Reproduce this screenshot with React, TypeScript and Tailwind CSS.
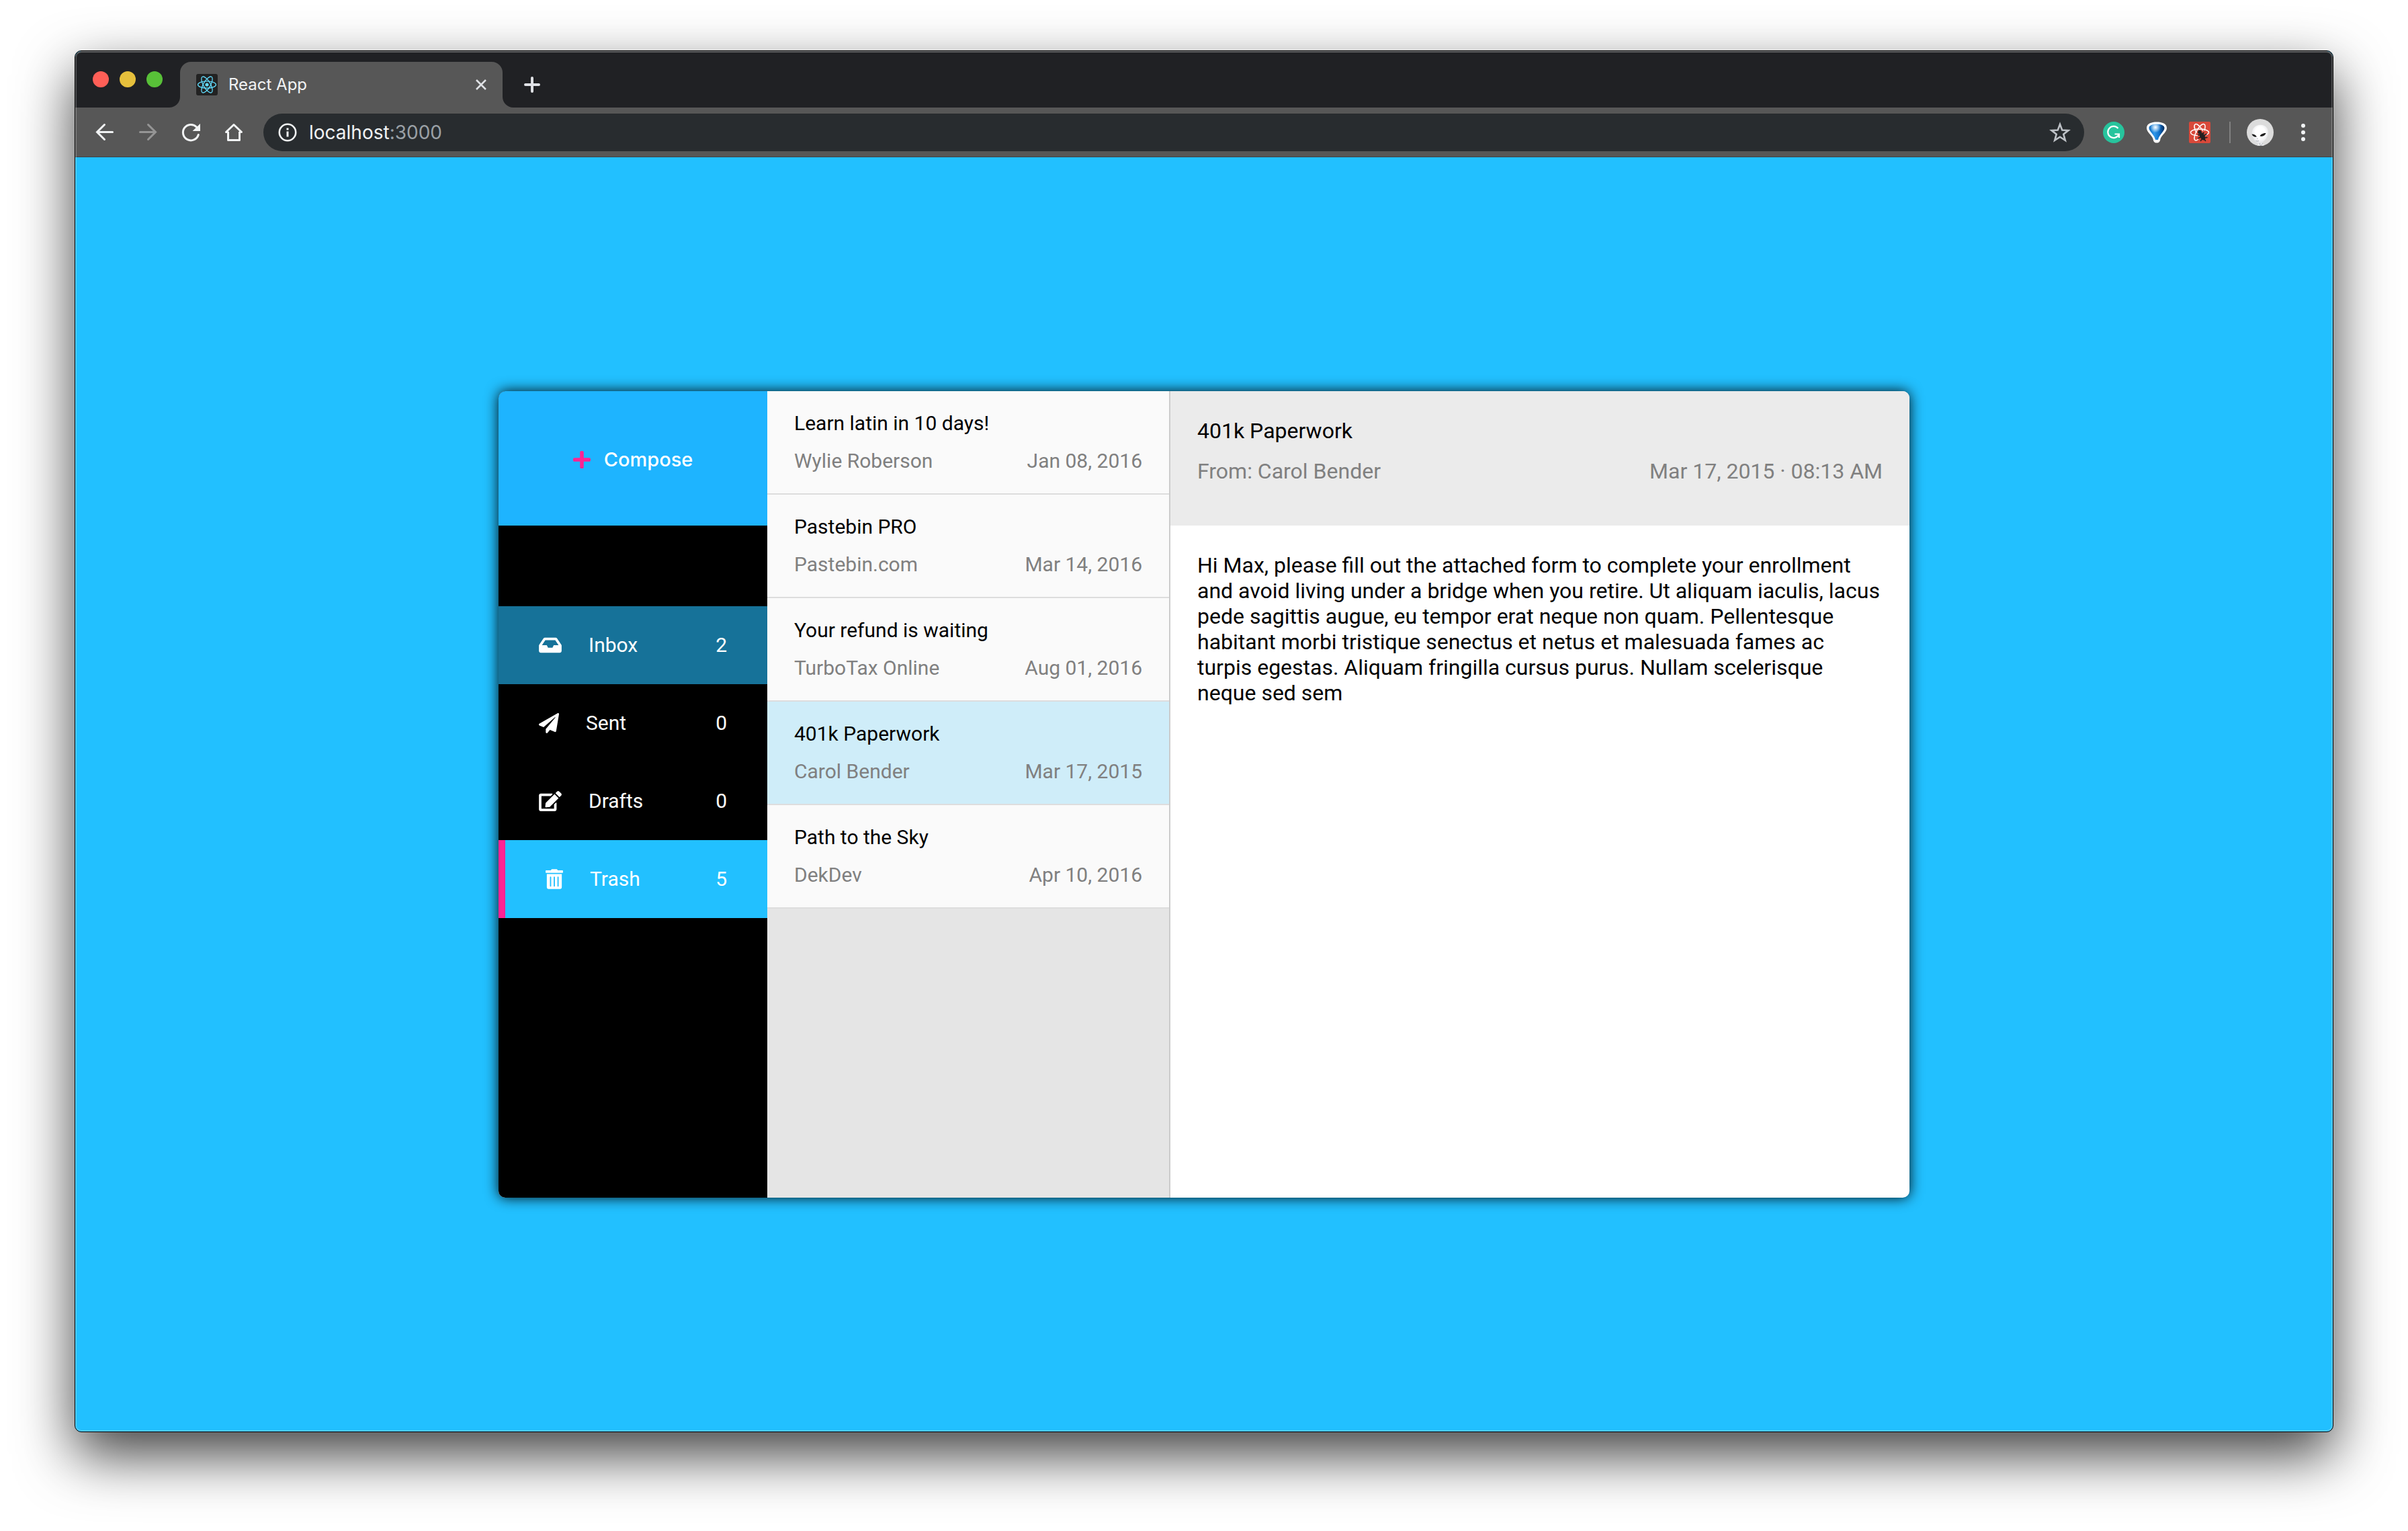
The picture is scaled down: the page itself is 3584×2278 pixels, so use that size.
import React from "react";
import { FaInbox, FaPaperPlane, FaEdit, FaPlus } from "react-icons/fa";

type Folder = { name: string; count: number; icon: React.ReactNode; state?: "hover" | "active" };
type Mail = { subject: string; from: string; date: string; selected?: boolean };

const TrashIcon = () => (
  <svg viewBox="0 0 448 512" className="h-[30px] w-[26px] shrink-0" fill="currentColor" aria-hidden="true">
    <path fillRule="evenodd" d="M32 464a48 48 0 0 0 48 48h288a48 48 0 0 0 48-48V128H32zm272-256a16 16 0 0 1 32 0v224a16 16 0 0 1-32 0zm-96 0a16 16 0 0 1 32 0v224a16 16 0 0 1-32 0zm-96 0a16 16 0 0 1 32 0v224a16 16 0 0 1-32 0zM432 32H312l-9.400-18.700A24 24 0 0 0 281.100 0H166.800a23.720 23.720 0 0 0-21.400 13.300L136 32H16A16 16 0 0 0 0 48v32a16 16 0 0 0 16 16h416a16 16 0 0 0 16-16V48a16 16 0 0 0-16-16z" />
  </svg>
);

const folders: Folder[] = [
  { name: "Inbox", count: 2, icon: <FaInbox className="h-[30px] w-[34px] shrink-0" />, state: "hover" },
  { name: "Sent", count: 0, icon: <FaPaperPlane className="size-[30px] shrink-0" /> },
  { name: "Drafts", count: 0, icon: <FaEdit className="h-[30px] w-[34px] shrink-0" /> },
  { name: "Trash", count: 5, icon: <TrashIcon />, state: "active" },
];

const mails: Mail[] = [
  { subject: "Learn latin in 10 days!", from: "Wylie Roberson", date: "Jan 08, 2016" },
  { subject: "Pastebin PRO", from: "Pastebin.com", date: "Mar 14, 2016" },
  { subject: "Your refund is waiting", from: "TurboTax Online", date: "Aug 01, 2016" },
  { subject: "401k Paperwork", from: "Carol Bender", date: "Mar 17, 2015", selected: true },
  { subject: "Path to the Sky", from: "DekDev", date: "Apr 10, 2016" },
];

function ReactFavicon() {
  return (
    <svg viewBox="0 0 32 32" className="size-8 shrink-0" aria-hidden="true">
      <rect width="32" height="32" rx="3" fill="#222" />
      <g fill="none" stroke="#61dafb" strokeWidth="1.3">
        <ellipse cx="16" cy="16" rx="13.500" ry="5.200" />
        <ellipse cx="16" cy="16" rx="13.500" ry="5.200" transform="rotate(60 16 16)" />
        <ellipse cx="16" cy="16" rx="13.500" ry="5.200" transform="rotate(120 16 16)" />
      </g>
      <circle cx="16" cy="16" r="2.600" fill="#61dafb" />
    </svg>
  );
}

function TabStrip() {
  return (
    <div className="flex h-[84px] items-end bg-[#202124]">
      <div className="flex h-[84px] items-center gap-4 pl-[26px] pr-[10px]">
        <button aria-label="Close window" className="size-6 rounded-full bg-[#ff5f57]" />
        <button aria-label="Minimize window" className="size-6 rounded-full bg-[#e6c03c]" />
        <button aria-label="Zoom window" className="size-6 rounded-full bg-[#58c038]" />
      </div>
      <svg viewBox="0 0 16 16" className="size-4 shrink-0" aria-hidden="true">
        <path d="M16 0v16H0A16 16 0 0 0 16 0z" fill="#575757" />
      </svg>
      <div className="flex h-[68px] w-[480px] items-center rounded-t-2xl bg-[#575757] px-6">
        <ReactFavicon />
        <span className="ml-4 grow text-2xl text-[#f1f3f4]">React App</span>
        <button aria-label="Close tab" className="flex size-4 items-center justify-center">
          <svg viewBox="0 0 16 16" className="size-4" stroke="#dfe1e5" strokeWidth="2.600" aria-hidden="true">
            <path d="M1 1l14 14M15 1L1 15" />
          </svg>
        </button>
      </div>
      <svg viewBox="0 0 16 16" className="size-4 shrink-0" aria-hidden="true">
        <path d="M0 0v16h16A16 16 0 0 1 0 0z" fill="#575757" />
      </svg>
      <button aria-label="New tab" className="ml-4 flex h-[68px] w-6 items-center">
        <svg viewBox="0 0 24 24" className="size-6" stroke="#dfe1e5" strokeWidth="4" strokeLinecap="round" aria-hidden="true">
          <path d="M12 2v20M2 12h20" />
        </svg>
      </button>
    </div>
  );
}

function Toolbar() {
  return (
    <div className="flex h-[74px] items-center border-b border-[#3f4346] bg-[#575757] px-7">
      <div className="flex gap-8">
        <button aria-label="Back" className="size-8">
          <svg viewBox="0 0 32 32" className="size-8" fill="none" stroke="#f1f3f4" strokeWidth="3" strokeLinecap="round" aria-hidden="true">
            <path d="M27.500 15.500H5M15.500 4.500L4.500 15.500l11 11" />
          </svg>
        </button>
        <button aria-label="Forward" className="size-8">
          <svg viewBox="0 0 32 32" className="size-8" fill="none" stroke="#959595" strokeWidth="3" strokeLinecap="round" aria-hidden="true">
            <path d="M4.500 15.500H27M16.500 4.500l11 11-11 11" />
          </svg>
        </button>
        <button aria-label="Reload" className="size-8">
          <svg viewBox="0 0 32 32" className="size-8" fill="none" stroke="#f1f3f4" strokeWidth="3" strokeLinecap="round" aria-hidden="true">
            <path d="M27.300 19.500A11.700 11.700 0 1 1 24.500 8" />
            <path d="M30 3v11H18.500z" fill="#f1f3f4" stroke="none" />
          </svg>
        </button>
        <button aria-label="Home" className="size-8">
          <svg viewBox="0 0 32 32" className="size-8" fill="none" stroke="#f1f3f4" strokeWidth="3" strokeLinejoin="round" aria-hidden="true">
            <path d="M8 15.500H4.500L16 4.500l11.500 11H24M7.500 15v12.500h17V15" />
          </svg>
        </button>
      </div>
      <div className="ml-7 flex h-14 grow items-center rounded-full bg-[#282c2f] pl-[22px] pr-5">
        <svg viewBox="0 0 28 28" className="size-7 shrink-0" fill="none" stroke="#f1f3f4" strokeWidth="2.600" aria-hidden="true">
          <circle cx="14" cy="14" r="12.200" />
          <path d="M14 12.500v8M14 7.500v3" strokeWidth="3" />
        </svg>
        <a href="http://localhost:3000" className="ml-[18px] grow text-[28px] text-[#f1f3f4]">
          localhost<span className="text-[#9aa0a6]">:3000</span>
        </a>
        <button aria-label="Bookmark this page" className="size-8">
          <svg viewBox="0 0 32 32" className="size-8" fill="none" stroke="#bdc1c6" strokeWidth="2.600" aria-hidden="true">
            <path d="M16 4l3.300 8.600 9.200.5-7.200 5.700 2.500 9-7.800-5.100-7.800 5.100 2.500-9-7.200-5.700 9.200-.5z" />
          </svg>
        </button>
      </div>
      <div className="ml-7 flex items-center gap-8">
        <button aria-label="Grammarly" className="size-8">
          <svg viewBox="0 0 32 32" className="size-8" aria-hidden="true">
            <circle cx="16" cy="16" r="16" fill="#27c49d" />
            <path d="M22.500 10A8.600 8.600 0 1 0 23.500 19.500M17.500 18.500H24V24" fill="none" stroke="#fff" strokeWidth="2.200" />
          </svg>
        </button>
        <button aria-label="Balloon" className="size-8">
          <svg viewBox="0 0 32 32" className="size-8" aria-hidden="true">
            <defs>
              <linearGradient id="balloon" x1="0" x2="1" y1="0" y2="0">
                <stop offset="0" stopColor="#0f6cc0" />
                <stop offset=".35" stopColor="#2f96e8" />
                <stop offset=".65" stopColor="#1273cc" />
                <stop offset="1" stopColor="#032a5c" />
              </linearGradient>
              <radialGradient id="shine" cx=".42" cy=".2" r=".35">
                <stop offset="0" stopColor="#fff" />
                <stop offset="1" stopColor="#fff" stopOpacity="0" />
              </radialGradient>
            </defs>
            <path d="M16 0.500C8 0.500 1 3 1 9.500c0 6 7.500 10.500 9.500 16C11 29.500 12.500 31.500 16 31.500s5-2 5.500-6C23.500 20 31 15.500 31 9.500 31 3 24 .5 16 .5z" fill="#fff" />
            <path d="M16 3.800c-6 0-11.500 1.700-11.500 5.700 0 5 8 10 9.500 17.500h4C19.500 19.500 27.500 14.500 27.500 9.500c0-4-5.500-5.700-11.500-5.700z" fill="url(#balloon)" />
            <path d="M16 3.800c-6 0-11.500 1.700-11.500 5.700 0 5 8 10 9.500 17.500h4C19.500 19.500 27.500 14.500 27.500 9.500c0-4-5.500-5.700-11.500-5.700z" fill="url(#shine)" />
          </svg>
        </button>
        <button aria-label="React developer tools" className="size-8">
          <svg viewBox="0 0 32 32" className="size-8" aria-hidden="true">
            <rect width="32" height="32" rx="2" fill="#d9493a" />
            <g fill="none" stroke="#fff" strokeWidth="1.500" strokeLinecap="round">
              <path d="M12.500 20.800C6.500 20.300 2.500 18.300 2.500 16c0-2.800 6-5 13.500-5s13.500 2.200 13.500 5c0 1.600-2 3-5 4" />
              <path d="M13.500 26.500c-1.700 1.400-3.300 1.900-4.300 1.200-2.300-1.400-1.300-7.500 2.400-14.200S20.300 2.500 22.700 3.800c1.700 1 1.700 4.600.3 9" />
              <path d="M20.500 13.500C16.700 6.800 11.700 2.500 9.300 3.800 7.100 5.100 8 10.500 11 16.500" />
            </g>
            <g fill="#231f20" stroke="#231f20" strokeLinecap="round">
              <circle cx="16" cy="15.700" r="2.400" />
              <ellipse cx="20" cy="22" rx="3.600" ry="6" transform="rotate(-30 20 22)" stroke="none" />
              <path d="M20 18l2-1.500M23 20.500l3-2M24 24l3-.5M23 26l1.500 2.500M18 20l-4.500-.5M18 23l-4 1.500M19.500 25.500l-2 3" strokeWidth="1.600" />
            </g>
          </svg>
        </button>
      </div>
      <div className="ml-7 h-8 w-[2px] bg-[#808080]" />
      <button aria-label="Profile" className="ml-6 size-10">
        <svg viewBox="0 0 40 40" className="size-10" aria-hidden="true">
          <defs>
            <radialGradient id="face" cx=".5" cy=".4" r=".6">
              <stop offset=".5" stopColor="#fff" />
              <stop offset="1" stopColor="#dfe0e4" />
            </radialGradient>
          </defs>
          <circle cx="20" cy="20" r="20" fill="#dcdcdc" />
          <path d="M19 35l-3 4.500h10L23 36z" fill="#eef0f2" />
          <path d="M20.500 8.800C28 8.800 32.500 14 32 21c-.4 6.500-6.500 12-10 15.500-1.500 1-4 1-5.500 0C12 34 8 27 7.800 21 7.800 14 13 8.800 20.500 8.800z" fill="url(#face)" />
          <path d="M7.500 22.500c3 0 6.200 1.300 7.300 4-3.300.8-6.300-.7-7.300-4z" fill="#1c1c1c" />
          <path d="M28.500 21c-4 0-7.800 1.600-9 4.500 4 1.200 8-.5 9-4.500z" fill="#1c1c1c" />
          <path d="M13.500 32.500c1.500.7 3 .7 4.500 0M15 29l1.500.3M19 36l1.500 4M24 36l-3 4" stroke="#9a9ea6" strokeWidth=".8" fill="none" />
        </svg>
      </button>
      <button aria-label="Menu" className="ml-7 size-8">
        <svg viewBox="0 0 32 32" className="size-8" fill="#f1f3f4" aria-hidden="true">
          <circle cx="16" cy="6" r="3" />
          <circle cx="16" cy="16" r="3" />
          <circle cx="16" cy="26" r="3" />
        </svg>
      </button>
    </div>
  );
}

function FolderRow({ folder }: { folder: Folder }) {
  const tone =
    folder.state === "active"
      ? "bg-[#22c0ff] border-l-[10px] border-[#ff2393]"
      : folder.state === "hover"
        ? "bg-[#167299]"
        : "bg-black";
  return (
    <button className={`flex w-full items-center px-[60px] py-10 text-left text-[30px] leading-9 text-white ${tone}`}>
      {folder.icon}
      <span className="ml-10 grow">{folder.name}</span>
      <span>{folder.count}</span>
    </button>
  );
}

function MailRow({ mail }: { mail: Mail }) {
  return (
    <button
      className={`block w-full border-b-2 border-[#dddddd] px-10 py-[30px] text-left text-[30px] leading-9 ${mail.selected ? "bg-[#cfedf9]" : "bg-[#fafafa]"}`}
    >
      <span className="block text-black">{mail.subject}</span>
      <span className="mt-5 flex justify-between text-[#808080]">
        <span>{mail.from}</span>
        <span>{mail.date}</span>
      </span>
    </button>
  );
}

function MailClient() {
  return (
    <div className="flex min-h-[1200px] w-full max-w-[2100px] overflow-hidden rounded-[10px] bg-white font-['Roboto',sans-serif] shadow-[0_0_20px_rgba(0,0,0,0.950)]">
      <nav className="w-[400px] shrink-0 bg-black">
        <button className="flex h-[200px] w-full items-center justify-center gap-5 bg-[#1eb4ff] pt-1 font-['Inter',sans-serif] text-[29px] font-medium text-white">
          <FaPlus className="h-[30px] w-[26px] text-[#ff2393]" />
          Compose
        </button>
        <div className="mt-[120px]">
          {folders.map((f) => (
            <FolderRow key={f.name} folder={f} />
          ))}
        </div>
      </nav>
      <section className="w-[600px] shrink-0 border-r-2 border-[#cccccc] bg-[#e5e5e5]">
        {mails.map((m) => (
          <MailRow key={m.subject} mail={m} />
        ))}
      </section>
      <main className="min-w-0 grow text-[32px] leading-[38px]">
        <header className="h-[200px] bg-[#ebebeb] p-10">
          <h1 className="text-black">401k Paperwork</h1>
          <div className="mt-[22px] flex justify-between text-[#808080]">
            <span>From: Carol Bender</span>
            <span>Mar 17, 2015 · 08:13 AM</span>
          </div>
        </header>
        <p className="p-10 text-black">
          Hi Max, please fill out the attached form to complete your enrollment and avoid living under a bridge when you
          retire. Ut aliquam iaculis, lacus pede sagittis augue, eu tempor erat neque non quam. Pellentesque habitant
          morbi tristique senectus et netus et malesuada fames ac turpis egestas. Aliquam fringilla cursus purus. Nullam
          scelerisque neque sed sem
        </p>
      </main>
    </div>
  );
}

export default function App() {
  return (
    <div className="flex min-h-screen bg-white px-[111px] pt-[75px] pb-[147px] font-['Inter',sans-serif]">
      <div className="relative flex grow flex-col overflow-hidden rounded-[10px] border border-black bg-[#22c0ff] shadow-[0_34px_84px_rgba(0,0,0,0.750)]">
        <TabStrip />
        <Toolbar />
        <div className="flex grow items-center justify-center">
          <MailClient />
        </div>
        <div className="pointer-events-none absolute inset-0 rounded-[9px] border-2 border-white/20 border-t-white/30" />
      </div>
    </div>
  );
}
